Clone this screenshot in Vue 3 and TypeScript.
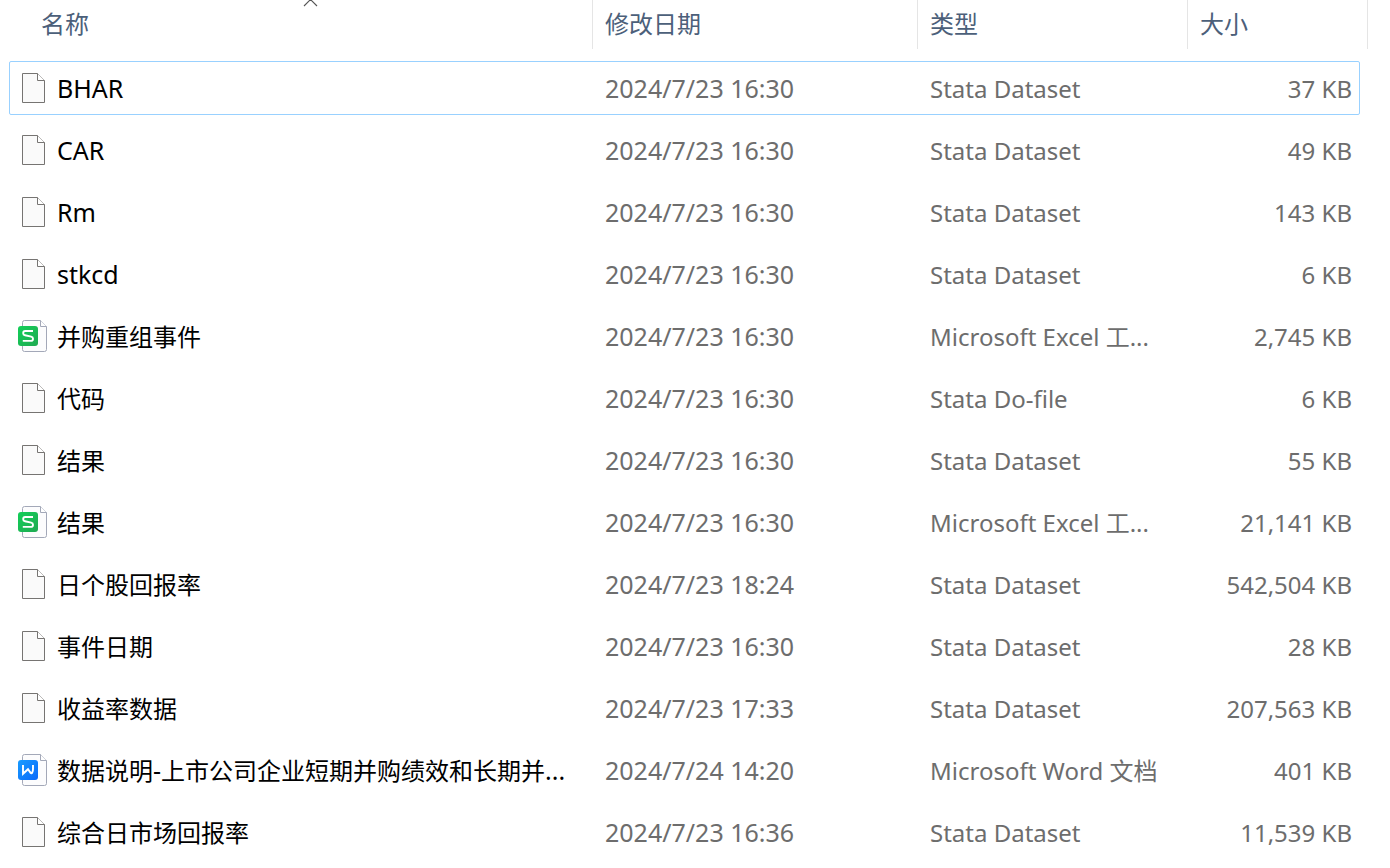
<script setup lang="ts">
type Kind = 'blank' | 'sheet' | 'doc'

interface FileRow {
  name: string
  date: string
  type: string
  size: string
  kind: Kind
  focused?: boolean
}

const files: FileRow[] = [
  { name: 'BHAR', date: '2024/7/23 16:30', type: 'Stata Dataset', size: '37 KB', kind: 'blank', focused: true },
  { name: 'CAR', date: '2024/7/23 16:30', type: 'Stata Dataset', size: '49 KB', kind: 'blank' },
  { name: 'Rm', date: '2024/7/23 16:30', type: 'Stata Dataset', size: '143 KB', kind: 'blank' },
  { name: 'stkcd', date: '2024/7/23 16:30', type: 'Stata Dataset', size: '6 KB', kind: 'blank' },
  { name: '并购重组事件', date: '2024/7/23 16:30', type: 'Microsoft Excel 工...', size: '2,745 KB', kind: 'sheet' },
  { name: '代码', date: '2024/7/23 16:30', type: 'Stata Do-file', size: '6 KB', kind: 'blank' },
  { name: '结果', date: '2024/7/23 16:30', type: 'Stata Dataset', size: '55 KB', kind: 'blank' },
  { name: '结果', date: '2024/7/23 16:30', type: 'Microsoft Excel 工...', size: '21,141 KB', kind: 'sheet' },
  { name: '日个股回报率', date: '2024/7/23 18:24', type: 'Stata Dataset', size: '542,504 KB', kind: 'blank' },
  { name: '事件日期', date: '2024/7/23 16:30', type: 'Stata Dataset', size: '28 KB', kind: 'blank' },
  { name: '收益率数据', date: '2024/7/23 17:33', type: 'Stata Dataset', size: '207,563 KB', kind: 'blank' },
  { name: '数据说明-上市公司企业短期并购绩效和长期并...', date: '2024/7/24 14:20', type: 'Microsoft Word 文档', size: '401 KB', kind: 'doc' },
  { name: '综合日市场回报率', date: '2024/7/23 16:36', type: 'Stata Dataset', size: '11,539 KB', kind: 'blank' },
]

const isCjk = (text: string): boolean => /[\u4e00-\u9fff]/.test(text)

// Splits a label so that Chinese runs can take their own size.
const runs = (text: string): string[] => text.match(/[\u4e00-\u9fff]+|[^\u4e00-\u9fff]+/g) ?? []
</script>

<template>
  <table class="files">
    <colgroup>
      <col />
      <col class="col-date" />
      <col class="col-type" />
      <col class="col-size" />
      <col class="col-rest" />
    </colgroup>
    <thead>
      <tr>
        <th scope="col" class="name-head" aria-sort="ascending">
          <button type="button">名称</button>
          <svg class="caret" width="15" height="8" viewBox="0 0 15 8" aria-hidden="true">
            <path d="M1 6 L7.5 -0.5 L14 6" fill="none" stroke="#555" stroke-width="1.1" />
          </svg>
        </th>
        <th scope="col"><button type="button">修改日期</button></th>
        <th scope="col"><button type="button">类型</button></th>
        <th scope="col"><button type="button">大小</button></th>
        <td></td>
      </tr>
    </thead>
    <tbody>
      <tr v-for="(file, i) in files" :key="i" :class="{ focused: file.focused }">
        <td class="name">
          <div class="entry">
            <svg v-if="file.kind === 'blank'" width="32" height="32" viewBox="0 0 32 32" aria-hidden="true">
              <path d="M6.5 1.5 H21.5 L28.5 8.5 V30.5 H6.5 Z" fill="#fafafa" stroke="#767472" />
              <path d="M21.5 1.5 V8.5 H28.5" fill="#fff" stroke="#767472" />
            </svg>
            <svg v-else width="32" height="32" viewBox="0 0 32 32" aria-hidden="true">
              <defs>
                <linearGradient :id="'badge-' + i" x1="0" y1="0" x2="1" y2="1">
                  <stop offset="0" :stop-color="file.kind === 'sheet' ? '#12cf58' : '#189cff'" />
                  <stop offset="1" :stop-color="file.kind === 'sheet' ? '#20a952' : '#0b69fa'" />
                </linearGradient>
              </defs>
              <path
                d="M8.5 0.5 H24.5 L30.5 6.5 V29.5 Q30.5 31.5 28.5 31.5 H8.5 Q6.5 31.5 6.5 29.5 V2.5 Q6.5 0.5 8.5 0.5 Z"
                fill="#fcfcfd"
                stroke="#a3a8b8"
              />
              <path d="M24.5 0.5 V6.5 H30.5" fill="#fff" stroke="#a3a8b8" />
              <rect x="2" y="6" width="20" height="20" rx="3" :fill="`url(#badge-${i})`" />
              <path
                v-if="file.kind === 'sheet'"
                d="M17 11 H9.2 Q7.2 11 7.2 13.2 Q7.2 14.8 9 15.2 L15.2 16.6 Q17 17 17 18.7 Q17 20.9 15 20.9 H6.8"
                fill="none"
                stroke="#fff"
                stroke-width="1.9"
              />
              <path
                v-else
                d="M7 11 V19.8 L12 15.2 L14.6 18.8 Q15.4 19.8 16.2 18.6 Q17 17 17 15 V11"
                fill="none"
                stroke="#fff"
                stroke-width="1.9"
              />
            </svg>
            <span><span v-for="(run, r) in runs(file.name)" :key="r" :class="{ cjk: isCjk(run) }">{{ run }}</span></span>
          </div>
        </td>
        <td>{{ file.date }}</td>
        <td class="type">{{ file.type }}</td>
        <td class="size">{{ file.size }}</td>
        <td></td>
      </tr>
    </tbody>
  </table>
</template>

<style>
body {
  background: #fff;
}
</style>

<style scoped>
.files {
  width: 100%;
  table-layout: fixed;
  border-collapse: separate;
  border-spacing: 0;
  font-family: 'Noto Sans', 'Noto Sans CJK SC', sans-serif;
  font-size: 25px;
  line-height: 32px;
  color: #6d6d6d;
}

.col-date {
  width: 325px;
}

.col-type {
  width: 270px;
}

.col-size {
  width: 180px;
}

.col-rest {
  width: 22px;
}

th,
td {
  padding: 0;
  text-align: left;
  font-weight: 400;
  white-space: nowrap;
}

th {
  position: relative;
  height: 57px;
  vertical-align: top;
}

th button {
  display: block;
  width: 100%;
  height: 49px;
  margin: 0;
  padding: 0 12px 4px;
  border: 0;
  border-right: 1px solid #e5e5e5;
  background: none;
  font-family: 'Noto Sans CJK SC', sans-serif;
  font-size: 24px;
  line-height: 44px;
  text-align: left;
  color: #4c607a;
}

.name-head button {
  padding-left: 41px;
}

.caret {
  position: absolute;
  top: 0;
  left: 303px;
}

tbody tr {
  position: relative;
}

tbody td {
  height: 62px;
  padding: 0 12px;
  box-sizing: border-box;
  vertical-align: middle;
}

tbody td.name {
  padding-left: 16px;
  color: #000;
}

tbody td:last-child {
  padding: 0;
}

tbody td.type,
tbody td.size {
  padding-top: 2px;
  font-size: 24px;
}

tbody td.size {
  padding-right: 16px;
  text-align: right;
}

.entry {
  display: flex;
  align-items: center;
  gap: 9px;
}

.entry svg {
  flex: none;
}

.cjk {
  font-size: 24px;
}

.focused .name::after {
  content: '';
  position: absolute;
  inset: 4px 30px 4px 9px;
  border: 1px solid #99d1ff;
  border-radius: 2px;
  pointer-events: none;
}
</style>
